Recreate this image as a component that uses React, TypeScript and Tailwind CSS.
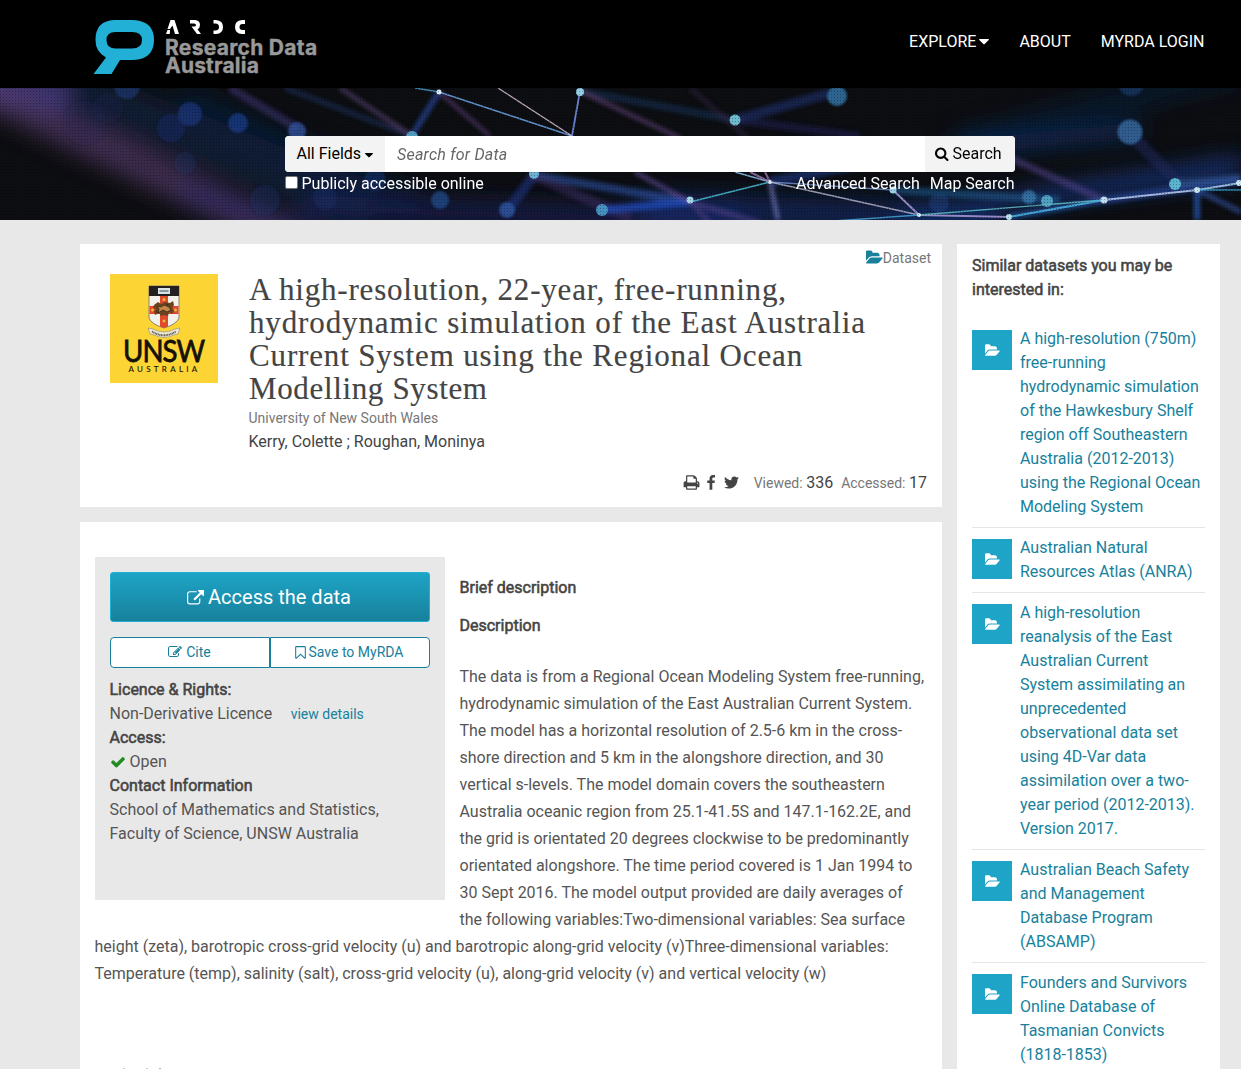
import type { ReactNode } from "react";

const ICONS = {
  search:
    "M1216 832q0-185-131.5-316.5t-316.5-131.5-316.5 131.5-131.5 316.5 131.5 316.5 316.5 131.5 316.5-131.5 131.5-316.5zm512 832q0 52-38 90t-90 38q-54 0-90-38l-343-342q-179 124-399 124-143 0-273.5-55.5t-225-150-150-225-55.5-273.5 55.5-273.5 150-225 225-150 273.5-55.5 273.5 55.5 225 150 150 225 55.5 273.5q0 220-124 399l343 343q37 37 37 90z",
  print:
    "M448 1536h896v-256h-896v256zm0-640h896v-384h-160q-40 0-68-28t-28-68v-160h-640v640zm1152 64q0-26-19-45t-45-19-45 19-19 45 19 45 45 19 45-19 19-45zm128 0v416q0 13-9.500 22.500t-22.500 9.500h-224v160q0 40-28 68t-68 28h-960q-40 0-68-28t-28-68v-160h-224q-13 0-22.500-9.500t-9.500-22.500v-416q0-79 56.500-135.500t135.500-56.500h64v-544q0-40 28-68t68-28h672q40 0 88 20t76 48l152 152q28 28 48 76t20 88v256h64q79 0 135.500 56.500t56.500 135.500z",
  facebook:
    "M1343 12v264h-157q-86 0-116 36t-30 108v189h293l-39 296h-254v759h-306v-759h-255v-296h255v-218q0-186 104-288.5t277-102.5q147 0 228 12z",
  twitter:
    "M1684 408q-67 98-162 167 1 14 1 42 0 130-38 259.500t-115.500 248.500-184.500 210.500-258 146-323 54.500q-271 0-496-145 35 4 78 4 225 0 401-138-105-2-188-64.500t-114-159.500q33 5 61 5 43 0 85-11-112-23-185.500-111.500t-73.500-205.500v-4q68 38 146 41-66-44-105-115t-39-154q0-88 44-163 121 149 294.500 238.500t371.500 99.500q-8-38-8-74 0-134 94.500-228.500t228.500-94.500q140 0 236 102 109-21 205-78-37 115-142 178 93-10 186-50z",
  check:
    "M1671 566q0 40-28 68l-724 724-136 136q-28 28-68 28t-68-28l-136-136-362-362q-28-28-28-68t28-68l136-136q28-28 68-28t68 28l294 295 656-657q28-28 68-28t68 28l136 136q28 28 28 68z",
  external:
    "M1408 928v320q0 119-84.500 203.500t-203.500 84.500h-832q-119 0-203.500-84.500t-84.500-203.500v-832q0-119 84.500-203.500t203.500-84.500h704q14 0 23 9t9 23v64q0 14-9 23t-23 9h-704q-66 0-113 47t-47 113v832q0 66 47 113t113 47h832q66 0 113-47t47-113v-320q0-14 9-23t23-9h64q14 0 23 9t9 23zm384-864v512q0 26-19 45t-45 19-45-19l-176-176-652 652q-10 10-23 10t-23-10l-114-114q-10-10-10-23t10-23l652-652-176-176q-19-19-19-45t19-45 45-19h512q26 0 45 19t19 45z",
  edit:
    "M888 1184l116-116-152-152-116 116v56h96v96h56zm440-720q-16-16-33 1l-350 350q-17 17-1 33t33-1l350-350q17-17 1-33zm80 594v190q0 119-84.500 203.500t-203.500 84.500h-832q-119 0-203.500-84.500t-84.500-203.500v-832q0-119 84.500-203.500t203.500-84.500h832q63 0 117 25 15 7 18 23 3 17-9 29l-49 49q-14 14-32 8-23-6-45-6h-832q-66 0-113 47t-47 113v832q0 66 47 113t113 47h832q66 0 113-47t47-113v-126q0-13 9-22l64-64q15-15 35-7t20 29zm-96-738l288 288-672 672h-288v-288zm444 132l-92 92-288-288 92-92q28-28 68-28t68 28l152 152q28 28 28 68t-28 68z",
  bookmark:
    "M1408 256h-1024v1242l423-406 89-85 89 85 423 406v-1242zm12-128q23 0 44 9 33 13 52.500 41t19.500 62v1289q0 34-19.500 62t-52.500 41q-19 8-44 8-48 0-83-32l-441-424-441 424q-36 33-83 33-23 0-44-9-33-13-52.500-41t-19.500-62v-1289q0-34 19.500-62t52.500-41q21-9 44-9h1048z",
  folder:
    "M1815 952q0 31-31 66l-336 396q-43 51-120.500 86.500t-143.500 35.500h-1088q-34 0-60.500-13t-26.500-43q0-31 31-66l336-396q43-51 120.500-86.500t143.500-35.500h1088q34 0 60.500 13t26.500 43zm-343-344v160h-832q-94 0-197 47.500t-164 119.500l-337 396-5 6q0-4-.5-12.500t-.5-12.500v-960q0-92 66-158t158-66h320q92 0 158 66t66 158v32h544q92 0 158 66t66 158z",
};

function Icon({ name, className, box = "0 0 1792 1792" }: { name: keyof typeof ICONS; className: string; box?: string }) {
  return (
    <svg viewBox={box} fill="currentColor" className={`shrink-0 ${className}`} aria-hidden="true">
      <path d={ICONS[name]} />
    </svg>
  );
}

function Strong({ children }: { children: ReactNode }) {
  return <span className="text-[#444] [-webkit-text-stroke:0.55px_#444]">{children}</span>;
}

function Caret({ className }: { className: string }) {
  return (
    <svg viewBox="0 0 10 6" fill="currentColor" className={className} aria-hidden="true">
      <path d="M0.600 0h8.800q.9.300.3 1L5.700 5q-.7.700-1.400 0L.3 1q-.6-.7.300-1z" />
    </svg>
  );
}

function Logo() {
  return (
    <div className="flex items-start gap-[10px]">
      <svg viewBox="0 0 61 55" className="mt-5 h-[55px] w-[61px]" aria-hidden="true">
        <path
          fillRule="evenodd"
          fill="#23b0d7"
          d="M21 0H40Q61 1 61 20Q61 39 40 40H27L18.500 54H.5L13 37.500Q2.500 32 2.500 20Q2.500 1 21 0ZM22.500 12Q13.500 12 13.500 20Q13.500 28.500 22.500 28.500H39Q49 28.500 49 20Q49 12 39 12Z"
        />
      </svg>
      <div className="mt-5 flex flex-col">
        <svg viewBox="0 0 80 14" className="ml-[2px] h-[14px] w-[80px]" fill="#fff" aria-hidden="true">
          <path d="M4.500 0h4L13 14H9L6.500 5.500L4 9H1.500ZM0 14L1.500 10H4L3.800 14Z" />
          <path d="M24 0h5q5 .4 5 5q0 3-2.500 4.200L35 14h-4L25.500 6.500H28q2 0 2-1.500q0-1.500-2-1.500h-4Z" />
          <path d="M47.500 0h2.500q7 .5 7 7t-7 7h-2.500v-3.500h2q3.500-.2 3.500-3.500t-3.500-3.500h-2Z" />
          <path d="M79 0h-3q-7 .5-7 7t7 7h3v-4h-2.500q-3-.2-3-3t3-3H79Z" />
        </svg>
        <div className="mt-[5px] ml-px font-['Inter',sans-serif] text-[21px] leading-[18px] font-bold tracking-[0.3px] whitespace-nowrap text-[#999] [-webkit-text-stroke:0.4px_#999]">
          Research Data
          <br />
          <span className="tracking-[0.2px]">Australia</span>
        </div>
      </div>
    </div>
  );
}

type Beam = [number, number, number, number, number, string, number];
const GLOWS: Beam[] = [
  [-30, -5, 290, 150, 34, "#5a4070", 0.65],
  [40, -10, 370, 120, 50, "#18244a", 0.6],
  [-30, -10, 70, 10, 34, "#5a489a", 0.6],
  [180, 10, 420, 120, 34, "#10224f", 0.4],
  [180, 100, 320, 150, 22, "#2b2a72", 0.5],
  [300, 120, 740, 134, 26, "#18235d", 0.7],
  [640, 120, 1000, 132, 30, "#183b91", 0.5],
  [950, 60, 1240, -20, 30, "#112657", 0.35],
  [960, 60, 1140, 42, 18, "#193d8c", 0.5],
  [900, 132, 1241, 75, 14, "#1b4097", 0.7],
  [1020, 110, 1241, 85, 12, "#243fa0", 0.5],
];
const SOFT: Beam[] = [
  [230, 0, 297, 40, 8, "#493c84", 0.5],
  [285, 0, 412, 48, 5, "#263e78", 0.5],
  [340, 0, 412, 48, 4, "#6f5394", 0.55],
  [439, 4, 411, 49, 6, "#294aa6", 0.7],
  [439, 4, 490, 48, 3, "#6c478d", 0.7],
  [580, 3, 735, 32, 7, "#1b365f", 0.55],
  [580, 3, 680, 50, 4, "#6e4a8a", 0.65],
  [735, 32, 830, 5, 10, "#1e3b85", 0.5],
  [735, 32, 860, 48, 8, "#20275c", 0.5],
  [690, 0, 750, 52, 6, "#412e58", 0.35],
  [534, 87, 690, 114, 8, "#2c55aa", 0.6],
  [534, 87, 505, 126, 10, "#243c91", 0.55],
  [530, 86, 630, 130, 10, "#4b387a", 0.4],
  [602, 122, 690, 114, 8, "#1f4bb9", 0.8],
  [690, 114, 760, 135, 6, "#594390", 0.55],
  [690, 114, 710, 135, 5, "#594390", 0.5],
  [635, 84, 690, 114, 4, "#68509e", 0.7],
  [770, 94, 778, 132, 4, "#8386cf", 0.7],
  [770, 94, 890, 70, 10, "#2145a1", 0.5],
  [1010, 70, 1104, 112, 7, "#5c4c9b", 0.5],
  [893, 102, 1060, 112, 8, "#2768a4", 0.5],
  [1009, 129, 1104, 112, 6, "#2563b8", 0.6],
  [1104, 112, 1241, 92, 8, "#2c58c0", 0.5],
  [1130, 46, 1180, 96, 12, "#1d2a5c", 0.55],
  [1175, 96, 1241, 90, 8, "#3c67a8", 0.5],
  [1197, 102, 1197, 132, 6, "#2956ae", 0.8],
  [1197, 102, 1241, 124, 5, "#3453a2", 0.7],
];
const LINES: Beam[] = [
  [415, 0, 439, 4, 1.5, "#4b9fcb", 0.8],
  [439, 4, 572, 48, 1.5, "#679bdc", 0.9],
  [498, 0, 572, 48, 1.3, "#d1bad3", 0.9],
  [580, 3, 572, 48, 1.8, "#728de0", 0.9],
  [690, 114, 770, 94, 1.8, "#47b2cb", 0.9],
  [735, 84, 770, 94, 1.5, "#86b8dc", 0.9],
  [750, 84, 770, 94, 2, "#9b79b8", 0.8],
  [765, 84, 770, 94, 2, "#9b79b8", 0.8],
  [770, 94, 893, 102, 1.5, "#718fcb", 0.8],
  [770, 94, 919, 127, 1.3, "#bcbad3", 0.8],
  [893, 102, 919, 127, 1.8, "#a897d6", 0.9],
  [919, 127, 1009, 129, 2, "#a294d0", 0.9],
  [820, 134, 919, 127, 1.5, "#48a9d9", 0.8],
  [919, 127, 1104, 112, 1.3, "#65c7cd", 0.8],
  [1009, 129, 1104, 112, 2, "#4aaddc", 0.9],
  [1104, 112, 1197, 102, 2, "#afc4ea", 0.9],
  [1197, 102, 1240, 95, 2, "#9ec6e8", 0.9],
  [1197, 102, 1241, 102, 1.3, "#38a9d1", 0.8],
];
const BOKEH: [number, number, number, string, number][] = [
  [127, -2, 13, "#23468c", 0.5],
  [190, 26, 12, "#1f3c85", 0.65],
  [171, 40, 14, "#1d3275", 0.4],
  [108, 20, 15, "#2a2b5c", 0.2],
  [85, 35, 22, "#202a5c", 0.2],
  [238, 35, 10, "#1e3d8a", 0.75],
  [297, 43, 9, "#3755a5", 0.75],
  [185, 75, 11, "#1c3473", 0.3],
  [375, 92, 11, "#1e3f8c", 0.4],
  [325, 110, 12, "#1c3573", 0.35],
  [265, 112, 15, "#1c3573", 0.3],
  [837, 8, 10, "#347bae", 0.8],
  [440, 112, 9, "#285ba6", 0.6],
  [507, 122, 8, "#305aa4", 0.75],
  [939, 115, 10, "#27498f", 0.4],
  [1131, -5, 13, "#234a88", 0.5],
  [1130, 44, 12.500, "#35679e", 0.85],
  [1029, 109, 7, "#3f82b7", 0.7],
];
const DOTS: [number, number, number, string, number][] = [
  [412, 49, 6, "#58a9cb", 0.9],
  [439, 4, 2.500, "#d8ecf4", 1],
  [580, 4, 4, "#92cfe4", 1],
  [735, 32, 5.500, "#72c3d4", 0.95],
  [534, 86, 5, "#71b7d8", 0.95],
  [602, 122, 6, "#4e9bcb", 0.9],
  [690, 112, 3.500, "#a6d3e6", 1],
  [770, 94, 2, "#dcecf4", 1],
  [893, 102, 3.500, "#9cd0e5", 1],
  [919, 127, 2, "#d6ebf3", 1],
  [1047, 113, 6, "#5eb6d2", 0.8],
  [1009, 129, 3, "#bce0e9", 1],
  [1104, 112, 3.500, "#c0dcea", 1],
  [1175, 96, 6, "#62c2da", 0.9],
  [1197, 102, 3, "#c9e5ed", 1],
  [1239, 95, 3, "#d0e7ee", 1],
];

function beams(list: Beam[]) {
  return list.map(([x1, y1, x2, y2, w, c, o], i) => (
    <line key={i} x1={x1} y1={y1} x2={x2} y2={y2} strokeWidth={w} stroke={c} opacity={o} />
  ));
}

function circles(list: typeof DOTS) {
  return list.map(([x, y, r, c, o], i) => <circle key={i} cx={x} cy={y} r={r} fill={c} opacity={o} />);
}

function NetworkBackdrop() {
  return (
    <svg viewBox="0 0 1241 132" className="absolute inset-0 h-full w-full" preserveAspectRatio="none" aria-hidden="true">
      <defs>
        <filter id="wide" x="-10%" y="-50%" width="120%" height="200%">
          <feGaussianBlur stdDeviation="11" />
        </filter>
        <filter id="soft">
          <feGaussianBlur stdDeviation="2" />
        </filter>
        <filter id="bokeh">
          <feGaussianBlur stdDeviation="1.2" />
        </filter>
        <filter id="fine">
          <feGaussianBlur stdDeviation="0.5" />
        </filter>
        <pattern id="mesh" width="3" height="3" patternUnits="userSpaceOnUse">
          <rect width="1" height="1" fill="#000" opacity="0.3" />
        </pattern>
      </defs>
      <rect width="1241" height="132" fill="#0d0e11" />
      <g filter="url(#wide)">{beams(GLOWS)}</g>
      <g filter="url(#soft)">{beams(SOFT)}</g>
      <g filter="url(#bokeh)">{circles(BOKEH)}</g>
      <g filter="url(#fine)">
        {beams(LINES)}
        {circles(DOTS)}
      </g>
      <rect width="1241" height="132" fill="url(#mesh)" />
    </svg>
  );
}

function UnswLogo() {
  return (
    <div className="flex h-[109px] w-[108px] shrink-0 flex-col items-center bg-[#fcd535] text-[#151008]">
      <svg viewBox="0 0 36 54" className="mt-[11px] h-[54px] w-[36px] shrink-0" aria-hidden="true">
        <path d="M3 1H33V33Q31 39 18 43Q5 39 3 33Z" fill="#f4f1ec" stroke="#8d8171" strokeWidth="1" />
        <path d="M3 1H33V11H3Z" fill="#241f20" />
        <path d="M12 3H24V9H12Z" fill="#d9e3e6" />
        <path d="M13.500 6H22.500" stroke="#6d7d86" strokeWidth="1.500" />
        <path d="M14 11H22V41.500L18 43L14 41.500ZM3.500 21H32.500V29H3.500Z" fill="#e1492c" />
        <path
          d="M8 20l4-3 3 2 4-2 5 1 3-2 1 4-2 3 2 3-2 3-3-2-1 4-4-1-3 1-2-3-4 2-1-4 2-2-3-1z"
          fill="#69431f"
        />
        <path d="M11 21l4 1 3-2 5 2 2 3-4 2-4-2-5 3 1-4zM10 26l3 2M20 19l3 1" fill="#c4874b" stroke="#3c2713" strokeWidth=".8" />
        <g fill="#e8b83a">
          <circle cx="18" cy="14.500" r="1.500" />
          <circle cx="18" cy="36" r="1.500" />
          <circle cx="6.500" cy="25" r="1.500" />
          <circle cx="29.500" cy="25" r="1.500" />
        </g>
        <path d="M2 43L7 44Q18 50 29 44L34 43L32 49L28 50Q18 55 8 50L4 49Z" fill="#ebe8d7" stroke="#8d8870" strokeWidth=".6" />
        <path d="M6 46.500Q18 54 30 46.500" fill="none" stroke="#58554e" strokeWidth="2" strokeDasharray="1 .6" />
      </svg>
      <div className="mt-[-3px] flex h-[29px] scale-x-[0.89] items-center pb-px font-['Lato',sans-serif] text-[31px] leading-[29px] font-normal tracking-[-1px] [-webkit-text-stroke:0.8px_#151008]">
        UNSW
      </div>
      <div className="pl-[1px] font-['Lato',sans-serif] text-[8px] leading-[9px] tracking-[3.300px] [-webkit-text-stroke:0.100px_#151008]">
        AUSTRALIA
      </div>
    </div>
  );
}

const SIMILAR: string[][] = [
  [
    "A high-resolution (750m)",
    "free-running",
    "hydrodynamic simulation",
    "of the Hawkesbury Shelf",
    "region off Southeastern",
    "Australia (2012-2013)",
    "using the Regional Ocean",
    "Modeling System",
  ],
  ["Australian Natural", "Resources Atlas (ANRA)"],
  [
    "A high-resolution",
    "reanalysis of the East",
    "Australian Current",
    "System assimilating an",
    "unprecedented",
    "observational data set",
    "using 4D-Var data",
    "assimilation over a two-",
    "year period (2012-2013).",
    "Version 2017.",
  ],
  ["Australian Beach Safety", "and Management", "Database Program", "(ABSAMP)"],
  ["Founders and Survivors", "Online Database of", "Tasmanian Convicts", "(1818-1853)"],
];

const DESCRIPTION = [
  "The data is from a Regional Ocean Modeling System free-running,",
  "hydrodynamic simulation of the East Australian Current System.",
  "The model has a horizontal resolution of 2.5-6 km in the cross-",
  "shore direction and 5 km in the alongshore direction, and 30",
  "vertical s-levels. The model domain covers the southeastern",
  "Australia oceanic region from 25.1-41.5S and 147.1-162.2E, and",
  "the grid is orientated 20 degrees clockwise to be predominantly",
  "orientated alongshore. The time period covered is 1 Jan 1994 to",
  "30 Sept 2016. The model output provided are daily averages of",
  "the following variables:Two-dimensional variables: Sea surface",
];

export default function App() {
  return (
    <div className="h-[1069px] w-[1241px] overflow-hidden bg-[#e8e8e8] font-['Roboto',sans-serif] text-[16px] leading-6 text-[#555]">
      <header className="flex h-[88px] justify-between bg-black pr-[36.500px] pl-[93px] text-white">
        <Logo />
        <nav className="flex items-start gap-[30px] pt-[30px] whitespace-nowrap">
          <span className="flex items-center gap-[3px]">
            EXPLORE
            <Caret className="h-[6px] w-[10px]" />
          </span>
          <span>ABOUT</span>
          <span>MYRDA LOGIN</span>
        </nav>
      </header>

      <section className="relative h-[132px] overflow-hidden">
        <NetworkBackdrop />
        <div className="relative ml-[285px] w-[730px] pt-12">
          <div className="flex h-9 overflow-hidden rounded-[4px] bg-white text-black">
            <div className="flex w-[100px] items-center gap-[4px] bg-[#f3f3f3] pl-[11.500px] whitespace-nowrap">
              All Fields
              <Caret className="mt-[2px] h-[5px] w-[8px]" />
            </div>
            <div className="flex flex-1 items-center pt-px pl-[12px] tracking-[0.22px] text-[#666] italic">Search for Data</div>
            <div className="flex w-[90px] items-center gap-[3.500px] bg-[#f3f3f3] pl-[10px]">
              <Icon name="search" className="h-[14px] w-[14px]" box="64 64 1728 1728" />
              <span>Search</span>
            </div>
          </div>
          <div className="flex h-6 items-center text-white">
            <span className="mb-[3px] h-[13px] w-[13px] rounded-[2px] border border-[#767676] bg-white" />
            <span className="ml-[3.500px]">Publicly accessible online</span>
            <span className="ml-auto">Advanced Search</span>
            <span className="mr-[0.500px] ml-[10px]">Map Search</span>
          </div>
        </div>
      </section>

      <div className="flex gap-[15px] pt-6 pl-20">
        <main className="flex w-[862px] flex-col gap-[15px]">
          <section className="h-[263px] bg-white">
            <div className="flex h-[30px] items-center justify-end pr-[11px] pb-[2px] text-[14px] text-[#777]">
              <Icon name="folder" className="mb-[2px] h-[17px] w-[17px] text-[#17819c]" box="0 0 1850 1792" />
              Dataset
            </div>
            <div className="flex h-[195px] pl-[30px]">
              <UnswLogo />
              <div className="ml-[30.500px]">
                <h1 className="mt-[-1px] mb-px ml-[0.500px] font-['Liberation_Serif',serif] text-[31px] leading-[33px] whitespace-nowrap text-[#444] [-webkit-text-stroke:0.15px_#444]">
                  <span className="block tracking-[0.8px]">A high-resolution, 22-year, free-running,</span>
                  <span className="block tracking-[0.87px]">hydrodynamic simulation of the East Australia</span>
                  <span className="block tracking-[0.85px]">Current System using the Regional Ocean</span>
                  <span className="block tracking-[0.65px]">Modelling System</span>
                </h1>
                <div className="text-[14px] leading-6 text-[#777]">University of New South Wales</div>
                <div className="text-[#444]">Kerry, Colette ; Roughan, Moninya</div>
              </div>
            </div>
            <div className="flex h-[28px] items-center justify-end pr-[15px] text-[#444]">
              <Icon name="print" className="mb-px h-[17px] w-[17px]" />
              <Icon name="facebook" className="mb-px ml-[3px] h-4 w-4" />
              <Icon name="twitter" className="mb-px ml-[4px] h-[17px] w-[17px]" />
              <span className="ml-[13.500px] text-[14px] text-[#777]">Viewed:</span>
              <span className="ml-[3.500px]">336</span>
              <span className="ml-[8px] text-[14px] text-[#777]">Accessed:</span>
              <span className="ml-[3.500px]">17</span>
            </div>
          </section>

          <section className="h-[560px] bg-white px-[15px] pt-[35px]">
            <div className="flex h-[376px] gap-[14.500px]">
              <aside className="h-[343px] w-[350px] shrink-0 bg-[#e8e8e8] p-[15px] text-[#555]">
                <div className="flex h-[50px] items-center justify-center gap-[4px] rounded-[3px] border border-[#1fb0d3] bg-linear-to-b from-[#1ea4c6] to-[#17819c] pr-[2px] text-[20px] text-white">
                  <Icon name="external" className="h-[17px] w-[17px]" box="0 0 1792 1600" />
                  Access the data
                </div>
                <div className="mt-[15px] flex h-[31px] text-[14px] text-[#17819c]">
                  <div className="flex w-[160px] items-center justify-center gap-1 rounded-l-[4px] border border-[#17819c] bg-white pr-px pb-px">
                    <Icon name="edit" className="h-[14px] w-[14px]" />
                    Cite
                  </div>
                  <div className="flex w-[160px] items-center justify-center gap-[3px] rounded-r-[4px] border border-[#17819c] bg-white pr-[2px] pb-px">
                    <Icon name="bookmark" className="h-[15px] w-[11px]" box="256 0 1280 1792" />
                    Save to MyRDA
                  </div>
                </div>
                <div className="ml-[-0.500px] pt-[10px]">
                  <Strong>Licence &amp; Rights:</Strong>
                  <div>
                    Non-Derivative Licence <span className="ml-[14.500px] text-[14px] text-[#17819c]">view details</span>
                  </div>
                  <Strong>Access:</Strong>
                  <div className="flex items-center gap-1">
                    <Icon name="check" className="h-4 w-4 text-[#228b22]" />
                    Open
                  </div>
                  <Strong>Contact Information</Strong>
                  <div>
                    School of Mathematics and Statistics,
                    <br />
                    Faculty of Science, UNSW Australia
                  </div>
                </div>
              </aside>
              <div className="pt-[19px] whitespace-nowrap">
                <div>
                  <Strong>Brief description</Strong>
                </div>
                <div className="mt-[14px]">
                  <Strong>Description</Strong>
                </div>
                <div className="mt-[25px] leading-[27px]">
                  {DESCRIPTION.map((line) => (
                    <div key={line}>{line}</div>
                  ))}
                </div>
              </div>
            </div>
            <div className="ml-[-0.500px] leading-[27px] whitespace-nowrap">
              height (zeta), barotropic cross-grid velocity (u) and barotropic along-grid velocity (v)Three-dimensional variables:
              <br />
              Temperature (temp), salinity (salt), cross-grid velocity (u), along-grid velocity (v) and vertical velocity (w)
            </div>
            <div className="mt-[81px] flex pl-7">
              <span className="h-px w-[2px] bg-[#ccc]" />
              <span className="ml-[21px] h-px w-[2px] bg-[#ccc]" />
              <span className="ml-[11px] h-px w-[2px] bg-[#aaa]" />
            </div>
          </section>
        </main>

        <aside className="h-[840px] w-[263px] bg-white px-[15px] pt-[10px]">
          <div className="pb-[17px]">
            <Strong>
              Similar datasets you may be
              <br />
              interested in:
            </Strong>
          </div>
          {SIMILAR.map((lines) => (
            <div key={lines[0]} className="flex gap-2 border-b border-[#e5e5e5] pb-2">
              <div className="mt-[11px] flex h-10 w-10 shrink-0 items-center justify-center bg-[#1ea4c6] text-white">
                <Icon name="folder" className="h-[15px] w-[15px]" box="0 0 1850 1792" />
              </div>
              <div className="pt-2 whitespace-nowrap text-[#17819c]">
                {lines.map((line) => (
                  <div key={line}>{line}</div>
                ))}
              </div>
            </div>
          ))}
        </aside>
      </div>
    </div>
  );
}
